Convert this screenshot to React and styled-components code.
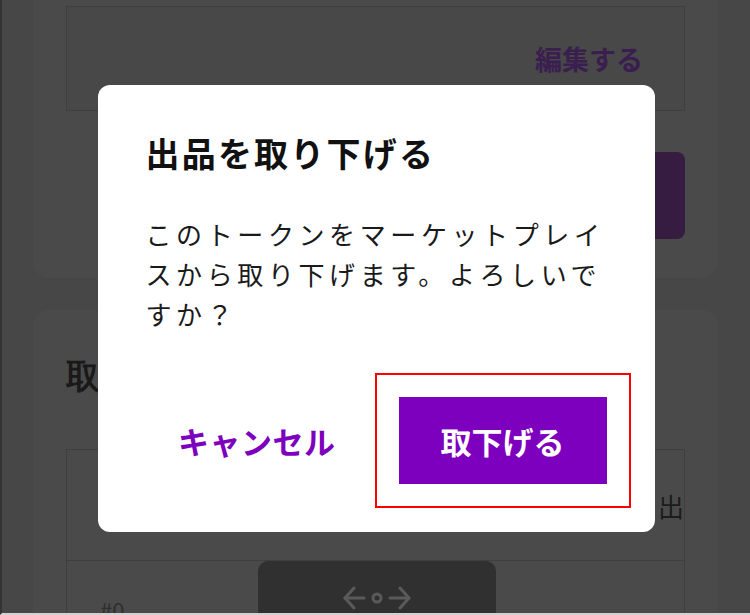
import React from "react";
import styled, { createGlobalStyle } from "styled-components";

const GlobalStyle = createGlobalStyle`
  html, body { margin: 0; padding: 0; background: #474747; }
  body { font-family: "Noto Sans CJK JP", "Noto Sans", sans-serif; }
  * { box-sizing: border-box; }
`;

const Frame = styled.div`
  position: relative;
  width: 750px;
  height: 615px;
  border-left: 2px solid #333333;
  border-bottom: 2px solid #d2d2d2;
  background: #8e8e8e;
  overflow: hidden;
`;

const Page = styled.main`
  margin-top: -40px;
  padding: 0 32px 0 31px;
  display: flex;
  flex-direction: column;
  gap: 32px;
`;

const Card = styled.section`
  background: #949494;
  border-radius: 16px;
  padding: ${(p) => p.$pad};
  display: flex;
  flex-direction: column;
`;

const EditPanel = styled.div`
  height: 105px;
  border: 1px solid #7e7e7e;
  background: #909090;
  display: flex;
  align-items: center;
  justify-content: flex-end;
  padding-right: 41px;
`;

const EditLink = styled.span`
  font-size: 27px;
  font-weight: 700;
  color: #763ca0;
`;

const ListButton = styled.button`
  align-self: flex-end;
  margin-top: 41px;
  width: 300px;
  height: 87px;
  border: none;
  border-radius: 8px;
  background: #6c3880;
`;

const SectionTitle = styled.h2`
  margin: 0 0 52px;
  font-family: "Liberation Serif", serif;
  font-size: 34px;
  line-height: 40px;
  font-weight: 700;
  color: #333333;
  white-space: nowrap;
`;

const Table = styled.div`
  border: 1px solid #7e7e7e;
  overflow: hidden;
  white-space: nowrap;
`;

const Row = styled.div`
  display: grid;
  grid-template-columns: 191px 238px 162px 1fr;
  align-items: ${(p) => (p.$head ? "center" : "start")};
  height: ${(p) => (p.$head ? "111px" : "auto")};
  border-bottom: ${(p) => (p.$head ? "1px solid #7e7e7e" : "none")};
`;

const HeadCell = styled.div`
  font-size: 26px;
  color: #383838;
  padding-left: ${(p) => p.$indent || 0}px;
  overflow: hidden;
`;

const IdCell = styled.div`
  padding: 35px 0 0 33px;
  font-size: 22px;
  line-height: 26px;
  color: #5c5c5c;
`;

const ThumbButton = styled.button`
  width: 238px;
  height: 74px;
  border: none;
  border-radius: 10px;
  background: #606060;
  display: flex;
  align-items: center;
  justify-content: center;
`;

const Backdrop = styled.div`
  position: absolute;
  inset: 0;
  background: rgba(0, 0, 0, 0.5);
  display: flex;
  align-items: center;
  justify-content: center;
  padding-top: 4px;
`;

const Modal = styled.div`
  width: 557px;
  background: #ffffff;
  border-radius: 12px;
  padding: 48px;
`;

const ModalTitle = styled.h3`
  margin: 0;
  font-size: 34px;
  line-height: 40px;
  font-weight: 700;
  letter-spacing: 2.2px;
  color: #111111;
`;

const ModalText = styled.p`
  margin: 41px 0 0;
  font-size: 26px;
  line-height: 40px;
  letter-spacing: 4.6px;
  color: #1a1a1a;
`;

const Footer = styled.div`
  margin-top: 63px;
  display: flex;
  justify-content: flex-end;
  align-items: center;
  gap: 47px;
`;

const TextButton = styled.button`
  background: none;
  border: none;
  padding: 0 16px;
  font-family: inherit;
  font-size: 31px;
  font-weight: 700;
  letter-spacing: 0.5px;
  color: #7d00be;
`;

const PrimaryButton = styled.button`
  width: 208px;
  height: 87px;
  border: none;
  border-radius: 0;
  background: #7d00be;
  color: #ffffff;
  font-family: inherit;
  font-size: 31px;
  font-weight: 700;
  outline: 2px solid #ff0000;
  outline-offset: 22px;
`;

const SwapIcon = () => (
  <svg width="68" height="24" viewBox="0 0 68 24" fill="none" stroke="#b4b4b4" strokeWidth="3" strokeLinecap="round" strokeLinejoin="round">
    <polyline points="11,2 2,12 11,22" />
    <line x1="2" y1="12" x2="21" y2="12" />
    <circle cx="34" cy="12" r="4" />
    <line x1="47" y1="12" x2="66" y2="12" />
    <polyline points="57,2 66,12 57,22" />
  </svg>
);

export default function App() {
  return (
    <>
      <GlobalStyle />
      <Frame>
        <Page>
          <Card $pad="46px 33px 39px">
            <EditPanel>
              <EditLink>編集する</EditLink>
            </EditPanel>
            <ListButton aria-label="出品する" />
          </Card>
          <Card $pad="47px 33px 40px">
            <SectionTitle>取引履歴</SectionTitle>
            <Table>
              <Row $head>
                <HeadCell $indent={33}>ID</HeadCell>
                <HeadCell>トークン</HeadCell>
                <HeadCell>価格</HeadCell>
                <HeadCell>出品者</HeadCell>
              </Row>
              <Row>
                <IdCell>#0</IdCell>
                <ThumbButton aria-label="詳細">
                  <SwapIcon />
                </ThumbButton>
              </Row>
            </Table>
          </Card>
        </Page>
        <Backdrop>
          <Modal role="dialog">
            <ModalTitle>出品を取り下げる</ModalTitle>
            <ModalText>このトークンをマーケットプレイスから取り下げます。よろしいですか？</ModalText>
            <Footer>
              <TextButton>キャンセル</TextButton>
              <PrimaryButton>取下げる</PrimaryButton>
            </Footer>
          </Modal>
        </Backdrop>
      </Frame>
    </>
  );
}
